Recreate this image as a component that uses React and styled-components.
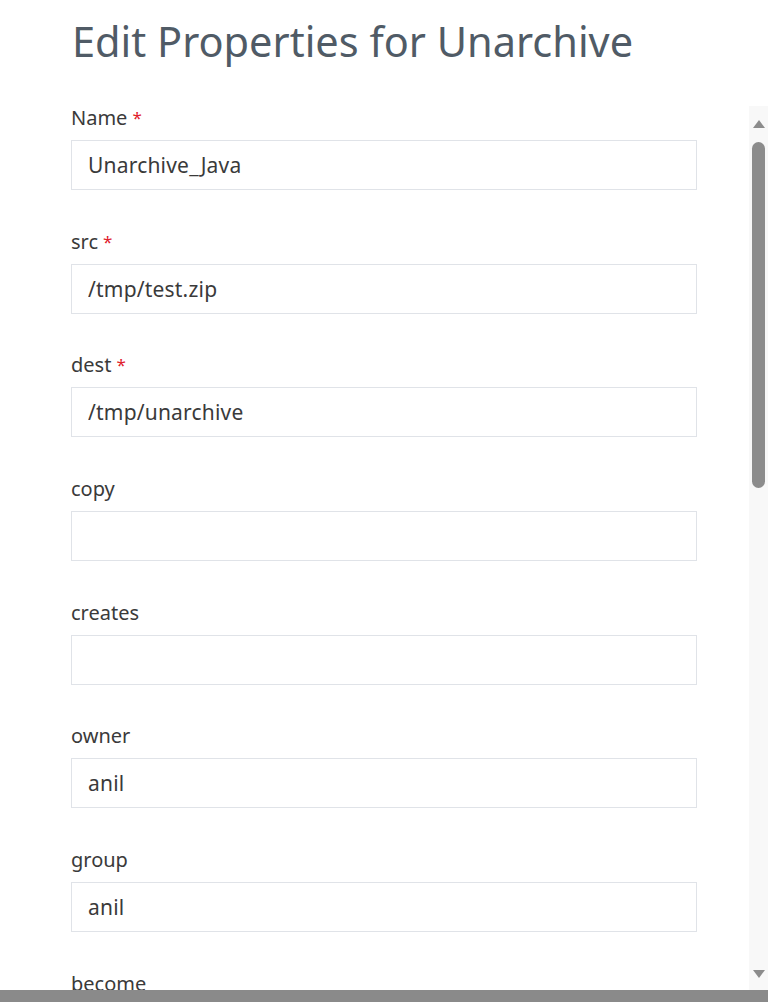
import styled, { createGlobalStyle } from 'styled-components'

const Global = createGlobalStyle`
  html, body { margin: 0; padding: 0; background: #fff; }
  body { font-family: "Noto Sans", "Liberation Sans", sans-serif; overflow: hidden; }
`

const Page = styled.div`
  height: 1002px; display: flex; flex-direction: column;
`
const Title = styled.h1`
  margin: 0; height: 106px; box-sizing: border-box;
  padding: 12px 0 0 72px;
  font-size: 41.5px; font-weight: 400; line-height: 58px;
  color: #505b66; letter-spacing: 0;
`
const Body = styled.div`
  flex: 1; display: flex; min-height: 0;
`
const Form = styled.div`
  flex: 1; padding: 0 52px 0 71px; overflow: hidden;
`
const Field = styled.div`
  display: flex; flex-direction: column; gap: 10px; margin-bottom: 39.67px;
`
const Label = styled.label`
  font-size: 20px; line-height: 24px; color: #3a3a3a;
  display: flex; align-items: flex-start; gap: 5px;
`
const Star = styled.span`color: #e0202b; font-size: 17px; line-height: 17px; margin-top: 3px;`
const Input = styled.input`
  box-sizing: border-box; width: 100%; height: 50px;
  border: 1px solid #e0e3e8; border-radius: 0; outline: none;
  padding: 0 16px; background: #fff;
  font-family: inherit; font-size: 21px; letter-spacing: 0.2px; color: #3a3a3a;
`
const ScrollTrack = styled.div`
  width: 19px; background: #f8f8f8; display: flex; flex-direction: column;
  align-items: center; padding: 14px 0 12px; box-sizing: border-box;
`
const Arrow = styled.div`
  width: 0; height: 0; border-left: 6px solid transparent; border-right: 6px solid transparent;
  ${p => p.down ? 'border-top: 8px solid #8c8c8c;' : 'border-bottom: 8px solid #8c8c8c;'}
`
const Thumb = styled.div`
  width: 13px; height: 346px; margin-top: 14px; border-radius: 7px; background: #8c8c8c;
`
const Spacer = styled.div`flex: 1;`
const Bottom = styled.div`height: 12px; background: #8a8a8a;`

const fields = [
  { name: 'Name', value: 'Unarchive_Java', required: true },
  { name: 'src', value: '/tmp/test.zip', required: true },
  { name: 'dest', value: '/tmp/unarchive', required: true },
  { name: 'copy', value: '' },
  { name: 'creates', value: '' },
  { name: 'owner', value: 'anil' },
  { name: 'group', value: 'anil' },
  { name: 'become', value: '' },
]

export default function App() {
  return (
    <Page>
      <Global />
      <Title>Edit Properties for Unarchive</Title>
      <Body>
        <Form>
          {fields.map(f => (
            <Field key={f.name}>
              <Label>{f.name}{f.required && <Star>*</Star>}</Label>
              <Input defaultValue={f.value} />
            </Field>
          ))}
        </Form>
        <ScrollTrack>
          <Arrow />
          <Thumb />
          <Spacer />
          <Arrow down />
        </ScrollTrack>
      </Body>
      <Bottom />
    </Page>
  )
}
